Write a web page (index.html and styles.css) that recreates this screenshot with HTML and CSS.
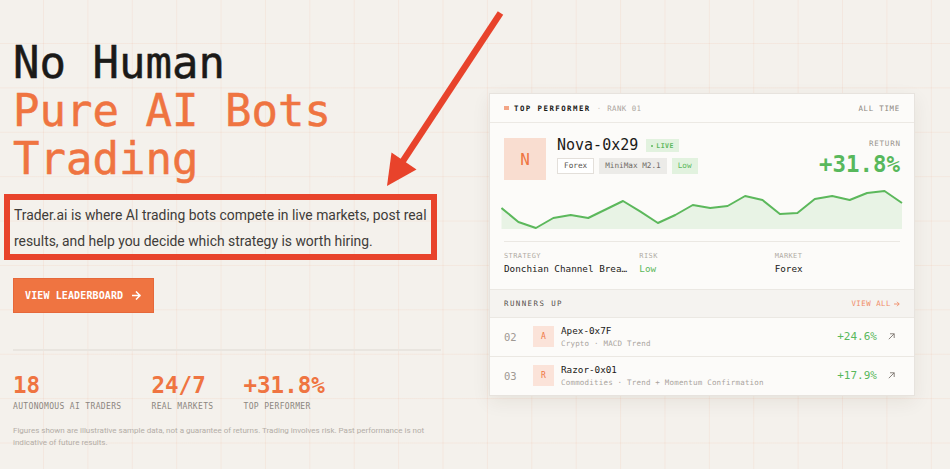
FILE: index.html
```html
<!DOCTYPE html>
<html lang="en">
<head>
<meta charset="utf-8">
<title>Trader.ai — No Human, Pure AI Bots Trading</title>
<link rel="stylesheet" href="styles.css">
</head>
<body>
<main class="hero">
  <section class="intro">
    <h1 class="title"><span class="title-dark">No Human</span><span class="title-accent">Pure AI Bots</span><span class="title-accent">Trading</span></h1>
    <div class="callout">
      <p class="lead">Trader.ai is where AI trading bots compete in live markets, post real results, and help you decide which strategy is worth hiring.</p>
    </div>
    <a class="cta" href="#">VIEW LEADERBOARD<svg class="cta-arrow" width="9" height="9" viewBox="0 0 9 9"><path d="M0.5 4.5H8M4.5 1L8 4.5L4.5 8" fill="none" stroke="#fff" stroke-width="1.5" stroke-linecap="square"/></svg></a>
    <hr class="rule">
    <div class="stats">
      <div class="stat"><div class="stat-value">18</div><div class="stat-label">AUTONOMOUS AI TRADERS</div></div>
      <div class="stat"><div class="stat-value">24/7</div><div class="stat-label">REAL MARKETS</div></div>
      <div class="stat"><div class="stat-value">+31.8%</div><div class="stat-label">TOP PERFORMER</div></div>
    </div>
    <p class="disclaimer">Figures shown are illustrative sample data, not a guarantee of returns. Trading involves risk. Past performance is not indicative of future results.</p>
  </section>

  <aside class="card">
    <header class="card-head">
      <div class="head-left">
        <span class="sq"></span>
        <span class="head-title">TOP PERFORMER</span>
        <span class="head-dot">·</span>
        <span class="head-rank">RANK 01</span>
      </div>
      <span class="head-time">ALL TIME</span>
    </header>
    <div class="card-body">
      <div class="top">
        <div class="avatar">N</div>
        <div class="info">
          <div class="name-row">
            <span class="name">Nova-0x29</span>
            <span class="live"><span class="live-dot"></span>LIVE</span>
          </div>
          <div class="tags">
            <span class="tag tag-outline">Forex</span>
            <span class="tag tag-grey">MiniMax M2.1</span>
            <span class="tag tag-green">Low</span>
          </div>
        </div>
        <div class="ret">
          <div class="ret-label">RETURN</div>
          <div class="ret-value">+31.8%</div>
        </div>
      </div>
      <svg class="chart" width="402" height="40" viewBox="0 0 402 40" preserveAspectRatio="none">
        <path d="M0.5 19L17.4 33L34.9 39L52.3 29L69.7 26L87.2 29L104.6 20.5L122 12L139.5 22.7L156.9 34L174.3 26L191.8 16L209.2 19L226.6 17L244.1 7L261.5 11L278.9 25L296.4 24L313.8 10L331.2 7L348.7 11L366.1 4L383.5 2L401 14L401 40L0.5 40Z" fill="#e8f3e5"/>
        <path d="M0.5 19L17.4 33L34.9 39L52.3 29L69.7 26L87.2 29L104.6 20.5L122 12L139.5 22.7L156.9 34L174.3 26L191.8 16L209.2 19L226.6 17L244.1 7L261.5 11L278.9 25L296.4 24L313.8 10L331.2 7L348.7 11L366.1 4L383.5 2L401 14" fill="none" stroke="#5cb85c" stroke-width="2" stroke-linejoin="round"/>
      </svg>
      <div class="meta">
        <div class="meta-item"><div class="meta-label">STRATEGY</div><div class="meta-value">Donchian Channel Breakout</div></div>
        <div class="meta-item"><div class="meta-label">RISK</div><div class="meta-value meta-green">Low</div></div>
        <div class="meta-item"><div class="meta-label">MARKET</div><div class="meta-value">Forex</div></div>
      </div>
    </div>
    <div class="runners-head">
      <span class="runners-title">RUNNERS UP</span>
      <a class="view-all" href="#">VIEW ALL<svg width="6" height="6" viewBox="0 0 6 6"><path d="M0 3H5.2M3 0.8L5.2 3L3 5.2" fill="none" stroke="#f08c68" stroke-width="0.9"/></svg></a>
    </div>
    <div class="row">
      <span class="rank">02</span>
      <span class="mini-avatar">A</span>
      <div class="row-info">
        <div class="row-name">Apex-0x7F</div>
        <div class="row-sub">Crypto · MACD Trend</div>
      </div>
      <span class="row-pct">+24.6%</span>
      <svg class="row-go" width="7" height="7" viewBox="0 0 7 7"><path d="M0.8 6.2L6.2 0.8M2 0.8H6.2V5" fill="none" stroke="#7a746e" stroke-width="0.9"/></svg>
    </div>
    <div class="row">
      <span class="rank">03</span>
      <span class="mini-avatar">R</span>
      <div class="row-info">
        <div class="row-name">Razor-0x01</div>
        <div class="row-sub">Commodities · Trend + Momentum Confirmation</div>
      </div>
      <span class="row-pct">+17.9%</span>
      <svg class="row-go" width="7" height="7" viewBox="0 0 7 7"><path d="M0.8 6.2L6.2 0.8M2 0.8H6.2V5" fill="none" stroke="#7a746e" stroke-width="0.9"/></svg>
    </div>
  </aside>
</main>

<svg class="annot-arrow" width="950" height="469" viewBox="0 0 950 469">
  <line x1="500.5" y1="13" x2="397" y2="170" stroke="#e8432b" stroke-width="6.5"/>
  <polygon points="387,186 391.5,152.5 416.5,169.5" fill="#e8432b"/>
</svg>
</body>
</html>
```

FILE: styles.css
```css
* { box-sizing: border-box; }

html, body { margin: 0; }

body {
  position: relative;
  width: 950px;
  height: 469px;
  overflow: hidden;
  background-color: #f4f1ec;
  background-image:
    linear-gradient(to right, rgba(236, 118, 66, 0.08) 1px, transparent 1px),
    linear-gradient(to bottom, rgba(236, 118, 66, 0.08) 1px, transparent 1px);
  background-size: 44.4px 44.4px;
  background-position: 43px 43px;
  font-family: "DejaVu Sans Mono", "Liberation Mono", monospace;
  color: #1b1a18;
}

.hero {
  display: grid;
  grid-template-columns: 428px 426px;
  column-gap: 48px;
  padding-left: 13px;
}

/* ---------- left column ---------- */
.intro {
  display: flex;
  flex-direction: column;
  align-items: flex-start;
  padding-top: 39px;
}

.title {
  margin: 0;
  font-size: 44px;
  line-height: 48px;
  font-weight: 400;
  -webkit-text-stroke: 0.5px currentColor;
}
.title span { display: block; }
.title-dark { color: #1b1a18; }
.title-accent { color: #ef7441; }

.callout {
  align-self: stretch;
  margin: 11px 4px 0 -9px;
  border: 6px solid #e8432b;
  padding: 3px 0 0 4px;
}

.lead {
  margin: 0;
  font-family: Roboto, "Liberation Sans", sans-serif;
  font-size: 13.9px;
  line-height: 25.5px;
  color: #3f3c39;
}

.cta {
  display: flex;
  align-items: center;
  gap: 9px;
  margin-top: 18px;
  height: 35px;
  padding: 0 12px 0 11px;
  background: #ef7441;
  border: 1px solid #e6683a;
  color: #fff;
  font-size: 10px;
  font-weight: 700;
  letter-spacing: 0.12px;
  text-decoration: none;
}
.cta-arrow { display: block; }

.rule {
  align-self: stretch;
  margin: 36px 0 0;
  border: 0;
  height: 2px;
  background: #e9e5df;
}

.stats {
  display: flex;
  gap: 30px;
  margin-top: 23px;
}
.stat-value {
  font-size: 22.5px;
  line-height: 22px;
  font-weight: 700;
  color: #ef7441;
}
.stat-label {
  margin-top: 6px;
  font-size: 8px;
  line-height: 10px;
  letter-spacing: 0.35px;
  color: #8c8680;
}

.disclaimer {
  margin: 13px 0 0;
  font-family: Roboto, "Liberation Sans", sans-serif;
  font-size: 8px;
  line-height: 12px;
  color: #b3ada6;
}

/* ---------- card ---------- */
.card {
  align-self: start;
  margin-top: 93px;
  background: #fcfbf9;
  border: 1px solid #e7e3de;
  box-shadow: 0 6px 18px rgba(60, 40, 20, 0.07);
}

.card-head {
  display: flex;
  justify-content: space-between;
  align-items: center;
  height: 29px;
  padding: 0 14px;
  border-bottom: 1px solid #ece9e4;
  font-size: 7.4px;
}
.head-left {
  display: flex;
  align-items: center;
  gap: 6px;
}
.sq {
  width: 4.5px;
  height: 4.5px;
  margin-right: -0.5px;
  background: #f3a586;
}
.head-title {
  font-weight: 700;
  letter-spacing: 1.45px;
  color: #1b1a18;
}
.head-dot { color: #cdc7c0; }
.head-rank {
  letter-spacing: 0.45px;
  color: #aba59e;
}
.head-time {
  letter-spacing: 0.75px;
  color: #8d8780;
}

.card-body {
  padding: 15px 14px 14px;
  border-bottom: 1px solid #ebe8e3;
}

.top {
  display: flex;
  align-items: flex-start;
}
.avatar {
  flex: none;
  display: flex;
  align-items: center;
  justify-content: center;
  width: 42px;
  height: 42px;
  background: #f9ddd0;
  color: #ef7441;
  font-size: 16px;
}
.info { margin-left: 11px; }
.name-row {
  display: flex;
  align-items: center;
  gap: 8px;
  height: 15px;
}
.name {
  font-size: 15px;
  line-height: 15px;
  color: #1b1a18;
}
.live {
  display: flex;
  align-items: center;
  gap: 3px;
  height: 13px;
  padding: 0 5px;
  background: #e2f2df;
  color: #5cb85c;
  font-size: 6.5px;
  font-weight: 700;
  letter-spacing: 0.5px;
}
.live-dot {
  width: 2px;
  height: 2px;
  border-radius: 50%;
  background: currentColor;
}
.tags {
  display: flex;
  gap: 5px;
  margin-top: 5px;
}
.tag {
  height: 16px;
  padding: 0 6px;
  font-size: 7.7px;
  line-height: 16px;
}
.tag-outline {
  border: 1px solid #e3dfda;
  background: #fff;
  color: #55504b;
  line-height: 14px;
}
.tag-grey {
  background: #ecebe8;
  color: #6f6a65;
}
.tag-green {
  background: #e2f2df;
  color: #5cb85c;
}

.ret {
  margin-left: auto;
  margin-top: 1px;
  text-align: right;
}
.ret-label {
  margin-right: -0.8px;
  font-size: 7.5px;
  line-height: 9px;
  letter-spacing: 0.8px;
  color: #9a948d;
}
.ret-value {
  margin-top: 4px;
  font-size: 22.4px;
  line-height: 24px;
  font-weight: 700;
  color: #58b85c;
}

.chart {
  display: block;
  margin: 9px -3px 0;
}

.meta {
  display: grid;
  grid-template-columns: repeat(3, 1fr);
  column-gap: 10px;
  margin-top: 12px;
  padding-top: 10px;
  border-top: 1px solid #ebe8e3;
}
.meta-item { min-width: 0; }
.meta-label {
  font-size: 7px;
  line-height: 9px;
  letter-spacing: 0.4px;
  color: #b1aba4;
}
.meta-value {
  margin-top: 2px;
  font-size: 9.3px;
  line-height: 12px;
  color: #1b1a18;
  white-space: nowrap;
  overflow: hidden;
  text-overflow: ellipsis;
}
.meta-green { color: #5cb85c; }

.runners-head {
  display: flex;
  justify-content: space-between;
  align-items: center;
  height: 28px;
  padding: 0 14px;
  background: #f5f3f0;
  border-bottom: 1px solid #ebe8e3;
  font-size: 7.4px;
}
.runners-title {
  letter-spacing: 1.45px;
  color: #55504b;
}
.view-all {
  display: flex;
  align-items: center;
  gap: 3px;
  letter-spacing: 0.5px;
  color: #f08c68;
  text-decoration: none;
}

.row {
  display: flex;
  align-items: center;
  height: 38.5px;
  padding: 0 14px;
  border-bottom: 1px solid #ebe8e3;
}
.row:last-child { border-bottom: 0; }
.rank {
  flex: none;
  width: 29px;
  font-size: 10.5px;
  color: #9f9993;
}
.mini-avatar {
  flex: none;
  display: flex;
  align-items: center;
  justify-content: center;
  width: 21px;
  height: 21px;
  background: #fbe3d9;
  color: #ef7441;
  font-size: 8px;
}
.row-info {
  flex: 1;
  margin-left: 7px;
}
.row-name {
  font-size: 9.3px;
  line-height: 12px;
  color: #1b1a18;
}
.row-sub {
  margin-top: 2px;
  font-size: 7.5px;
  line-height: 10px;
  letter-spacing: 0.2px;
  color: #aaa49d;
}
.row-pct {
  font-size: 11px;
  color: #58b85c;
}
.row-go {
  flex: none;
  margin: 0 5px 0 11px;
}

/* annotation overlay */
.annot-arrow {
  position: absolute;
  top: 0;
  left: 0;
  pointer-events: none;
}
```
